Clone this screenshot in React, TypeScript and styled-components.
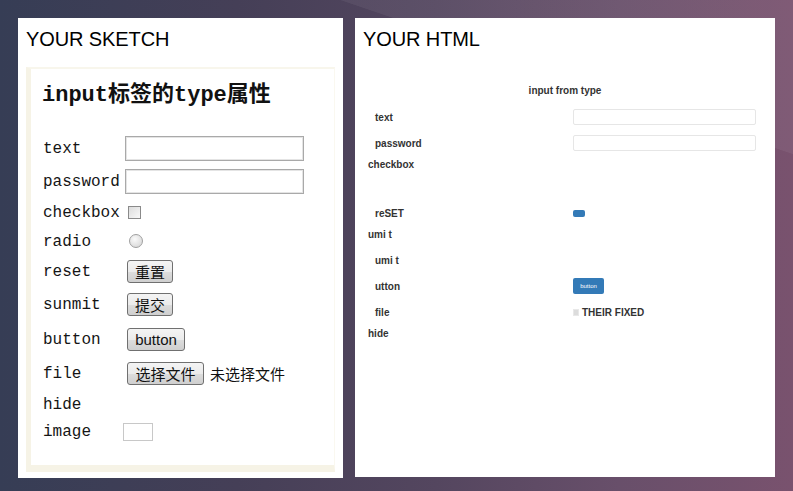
import React from "react";
import styled, { createGlobalStyle } from "styled-components";

const Global = createGlobalStyle`
  html, body { margin: 0; padding: 0; }
  body {
    width: 793px;
    height: 491px;
    overflow: hidden;
    background:
      linear-gradient(18.8deg, rgba(255,255,255,0) 79.7%, rgba(255,255,255,0.055) 79.8%),
      linear-gradient(90deg, #363d55 0%, #453f57 30%, #54465f 55%, #684f6a 78%, #79526e 100%);
    font-family: "Liberation Sans", Arial, sans-serif;
  }
`;

const Stage = styled.div`
  display: flex;
  align-items: flex-start;
  gap: 12px;
  padding: 18px;
  height: 491px;
  box-sizing: border-box;
`;

const Panel = styled.section<{ $w: number; $h: number }>`
  width: ${(p) => p.$w}px;
  height: ${(p) => p.$h}px;
  background: #fff;
  box-sizing: border-box;
  padding: 9px 0 0 8px;
  display: flex;
  flex-direction: column;
`;

const PanelTitle = styled.h2`
  margin: 0;
  font-family: "Liberation Sans", Arial, sans-serif;
  font-weight: normal;
  font-size: 20px;
  line-height: 24px;
  color: #000;
  letter-spacing: -0.1px;
`;

/* ---------- sketch ---------- */

const SketchFrame = styled.div`
  margin-top: 16px;
  width: 309px;
  height: 405px;
  box-sizing: border-box;
  background: #fff;
  border-left: 5px solid #f6f3e6;
  border-top: 2px solid #f8f6ec;
  border-bottom: 7px solid #f6f3e6;
  border-right: 1px solid #faf8f0;
  padding: 12px 0 0 11px;
  font-family: "Liberation Mono", "Noto Sans CJK SC", monospace;
  color: #151515;
`;

const SketchHeading = styled.h1`
  margin: 0 0 21px 0;
  font-family: "Liberation Mono", "Noto Sans CJK SC", monospace;
  font-size: 22px;
  line-height: 30px;
  font-weight: bold;
  color: #111;
`;

const SketchRow = styled.div<{ $h: number }>`
  display: flex;
  align-items: center;
  height: ${(p) => p.$h}px;
`;

const SketchLabel = styled.span`
  width: 83px;
  flex: none;
  font-size: 16px;
  line-height: 18px;
  padding: 1px 0 0 1px;
  box-sizing: border-box;
`;

const SketchInput = styled.div`
  width: 179px;
  height: 25px;
  box-sizing: border-box;
  border: 1px solid #a9a9a9;
  box-shadow: inset 0 0 0 1px #e4e4e4;
  background: #fff;
`;

const SketchCheck = styled.div`
  margin-left: 3px;
  width: 13px;
  height: 13px;
  box-sizing: border-box;
  border: 1px solid #8a8a8a;
  background: linear-gradient(135deg, #dcdcdc, #f8f8f8);
`;

const SketchRadio = styled.div`
  margin-left: 4px;
  width: 14px;
  height: 14px;
  border-radius: 50%;
  box-sizing: border-box;
  border: 1px solid #a0a0a0;
  background: radial-gradient(circle at 40% 35%, #fafafa, #d2d2d2);
`;

const SketchButton = styled.div<{ $w: number; $latin?: boolean }>`
  margin-left: 2px;
  width: ${(p) => p.$w}px;
  height: 23px;
  box-sizing: border-box;
  border: 1px solid #707070;
  border-radius: 3px;
  background: linear-gradient(#f4f4f4 0%, #ebebeb 50%, #dddddd 51%, #cfcfcf 100%);
  display: flex;
  align-items: center;
  justify-content: center;
  font-family: ${(p) => (p.$latin ? '"Liberation Sans", Arial, sans-serif' : '"Noto Sans CJK SC", sans-serif')};
  font-size: 15px;
  color: #111;
  flex: none;
`;

const SketchNote = styled.span`
  margin-left: 6px;
  font-family: "Noto Sans CJK SC", sans-serif;
  font-size: 15px;
  color: #111;
`;

const SketchImage = styled.div`
  margin-left: -2px;
  width: 30px;
  height: 18px;
  box-sizing: border-box;
  border: 1px solid #c8c8c8;
  background: #fff;
`;

/* ---------- html ---------- */

const HtmlBody = styled.div`
  margin: 30px 0 0 -8px;
  display: flex;
  flex-direction: column;
  font-family: "Liberation Sans", Arial, sans-serif;
  color: #333;
`;

const HtmlHeading = styled.div`
  height: 20px;
  line-height: 20px;
  text-align: center;
  font-size: 10px;
  font-weight: bold;
  color: #333;
  margin-bottom: 3px;
`;

const HtmlRow = styled.div<{ $h: number; $indent?: boolean; $after?: number }>`
  display: flex;
  align-items: center;
  height: ${(p) => p.$h}px;
  margin-bottom: ${(p) => p.$after ?? 0}px;
  padding-left: ${(p) => (p.$indent ? 20 : 13)}px;
`;

const HtmlLabel = styled.span<{ $indent?: boolean }>`
  width: ${(p) => (p.$indent ? 198 : 205)}px;
  flex: none;
  font-size: 10px;
  font-weight: bold;
  color: #333;
`;

const HtmlInput = styled.div`
  width: 183px;
  height: 16px;
  box-sizing: border-box;
  border: 1px solid #e6e6e6;
  border-radius: 2px;
  background: #fff;
`;

const BlueChip = styled.div`
  width: 12px;
  height: 7px;
  margin-top: 1px;
  border-radius: 2px;
  background: #337ab7;
`;

const BlueButton = styled.div`
  width: 31px;
  height: 16px;
  border-radius: 2px;
  background: #337ab7;
  color: #fff;
  font-size: 6px;
  display: flex;
  align-items: center;
  justify-content: center;
`;

const FileBox = styled.div`
  width: 6px;
  height: 7px;
  background: #dcdcdc;
  border: 1px solid #e8e8e8;
  box-sizing: border-box;
  margin-right: 3px;
`;

const FileText = styled.span`
  font-size: 10px;
  font-weight: bold;
  color: #333;
`;

export default function App() {
  return (
    <>
      <Global />
      <Stage>
        <Panel $w={325} $h={460}>
          <PanelTitle>YOUR SKETCH</PanelTitle>
          <SketchFrame>
            <SketchHeading>input标签的type属性</SketchHeading>
            <SketchRow $h={33}>
              <SketchLabel>text</SketchLabel>
              <SketchInput />
            </SketchRow>
            <SketchRow $h={33}>
              <SketchLabel>password</SketchLabel>
              <SketchInput />
            </SketchRow>
            <SketchRow $h={29}>
              <SketchLabel>checkbox</SketchLabel>
              <SketchCheck />
            </SketchRow>
            <SketchRow $h={28}>
              <SketchLabel>radio</SketchLabel>
              <SketchRadio />
            </SketchRow>
            <SketchRow $h={32}>
              <SketchLabel>reset</SketchLabel>
              <SketchButton $w={46}>重置</SketchButton>
            </SketchRow>
            <SketchRow $h={35}>
              <SketchLabel>sunmit</SketchLabel>
              <SketchButton $w={46}>提交</SketchButton>
            </SketchRow>
            <SketchRow $h={35}>
              <SketchLabel>button</SketchLabel>
              <SketchButton $w={58} $latin>button</SketchButton>
            </SketchRow>
            <SketchRow $h={33}>
              <SketchLabel>file</SketchLabel>
              <SketchButton $w={77}>选择文件</SketchButton>
              <SketchNote>未选择文件</SketchNote>
            </SketchRow>
            <SketchRow $h={28}>
              <SketchLabel>hide</SketchLabel>
            </SketchRow>
            <SketchRow $h={27}>
              <SketchLabel>image</SketchLabel>
              <SketchImage />
            </SketchRow>
          </SketchFrame>
        </Panel>

        <Panel $w={420} $h={459}>
          <PanelTitle>YOUR HTML</PanelTitle>
          <HtmlBody>
            <HtmlHeading>input from type</HtmlHeading>
            <HtmlRow $h={26} $indent>
              <HtmlLabel $indent>text</HtmlLabel>
              <HtmlInput />
            </HtmlRow>
            <HtmlRow $h={26} $indent>
              <HtmlLabel $indent>password</HtmlLabel>
              <HtmlInput />
            </HtmlRow>
            <HtmlRow $h={16} $after={28}>
              <HtmlLabel>checkbox</HtmlLabel>
            </HtmlRow>
            <HtmlRow $h={26} $indent>
              <HtmlLabel $indent>reSET</HtmlLabel>
              <BlueChip />
            </HtmlRow>
            <HtmlRow $h={16} $after={5}>
              <HtmlLabel>umi t</HtmlLabel>
            </HtmlRow>
            <HtmlRow $h={26} $indent>
              <HtmlLabel $indent>umi t</HtmlLabel>
            </HtmlRow>
            <HtmlRow $h={26} $indent>
              <HtmlLabel $indent>utton</HtmlLabel>
              <BlueButton>button</BlueButton>
            </HtmlRow>
            <HtmlRow $h={26} $indent>
              <HtmlLabel $indent>file</HtmlLabel>
              <FileBox />
              <FileText>THEIR FIXED</FileText>
            </HtmlRow>
            <HtmlRow $h={16}>
              <HtmlLabel>hide</HtmlLabel>
            </HtmlRow>
          </HtmlBody>
        </Panel>
      </Stage>
    </>
  );
}
